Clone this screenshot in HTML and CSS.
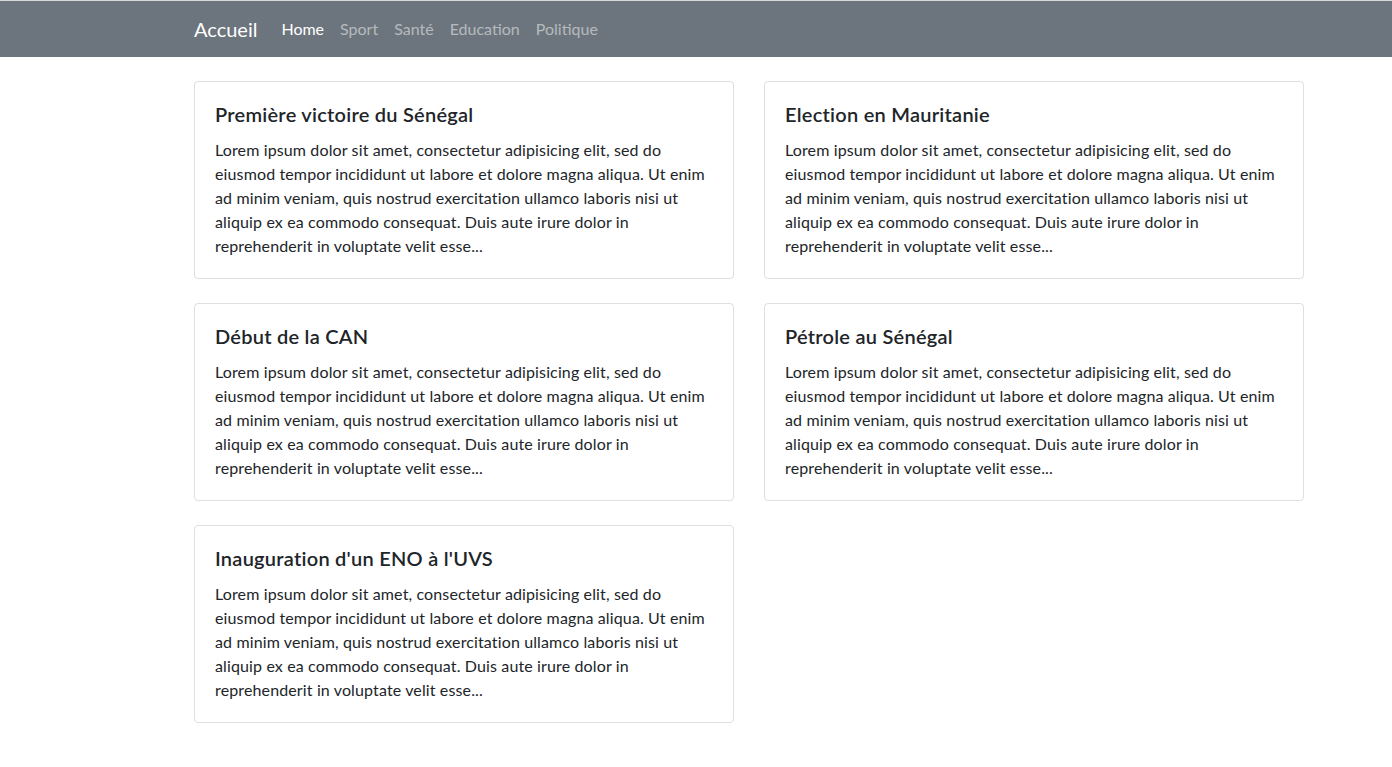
FILE: index.html
```html
<!DOCTYPE html>
<html lang="fr">
<head>
<meta charset="utf-8">
<title>Accueil</title>
<link rel="stylesheet" href="styles.css">
</head>
<body>
<div class="topline"></div>
<nav class="navbar">
  <div class="container nav-inner">
    <a class="brand" href="#">Accueil</a>
    <ul class="nav-links">
      <li><a class="active" href="#">Home</a></li>
      <li><a href="#">Sport</a></li>
      <li><a href="#">Santé</a></li>
      <li><a href="#">Education</a></li>
      <li><a href="#">Politique</a></li>
    </ul>
  </div>
</nav>
<main class="container grid">
  <article class="card">
    <h5 class="card-title">Première victoire du Sénégal</h5>
    <p class="card-text">Lorem ipsum dolor sit amet, consectetur adipisicing elit, sed do eiusmod tempor incididunt ut labore et dolore magna aliqua. Ut enim ad minim veniam, quis nostrud exercitation ullamco laboris nisi ut aliquip ex ea commodo consequat. Duis aute irure dolor in reprehenderit in voluptate velit esse...</p>
  </article>
  <article class="card">
    <h5 class="card-title">Election en Mauritanie</h5>
    <p class="card-text">Lorem ipsum dolor sit amet, consectetur adipisicing elit, sed do eiusmod tempor incididunt ut labore et dolore magna aliqua. Ut enim ad minim veniam, quis nostrud exercitation ullamco laboris nisi ut aliquip ex ea commodo consequat. Duis aute irure dolor in reprehenderit in voluptate velit esse...</p>
  </article>
  <article class="card">
    <h5 class="card-title">Début de la CAN</h5>
    <p class="card-text">Lorem ipsum dolor sit amet, consectetur adipisicing elit, sed do eiusmod tempor incididunt ut labore et dolore magna aliqua. Ut enim ad minim veniam, quis nostrud exercitation ullamco laboris nisi ut aliquip ex ea commodo consequat. Duis aute irure dolor in reprehenderit in voluptate velit esse...</p>
  </article>
  <article class="card">
    <h5 class="card-title">Pétrole au Sénégal</h5>
    <p class="card-text">Lorem ipsum dolor sit amet, consectetur adipisicing elit, sed do eiusmod tempor incididunt ut labore et dolore magna aliqua. Ut enim ad minim veniam, quis nostrud exercitation ullamco laboris nisi ut aliquip ex ea commodo consequat. Duis aute irure dolor in reprehenderit in voluptate velit esse...</p>
  </article>
  <article class="card">
    <h5 class="card-title">Inauguration d'un ENO à l'UVS</h5>
    <p class="card-text">Lorem ipsum dolor sit amet, consectetur adipisicing elit, sed do eiusmod tempor incididunt ut labore et dolore magna aliqua. Ut enim ad minim veniam, quis nostrud exercitation ullamco laboris nisi ut aliquip ex ea commodo consequat. Duis aute irure dolor in reprehenderit in voluptate velit esse...</p>
  </article>
</main>
</body>
</html>
```
FILE: styles.css
```css
* { box-sizing: border-box; }
html, body {
  margin: 0;
  padding: 0;
  background: #fff;
}
body {
  font-family: "Segoe UI", Lato, "Liberation Sans", sans-serif;
  font-size: 16px;
  line-height: 1.5;
  color: #212529;
}
.topline {
  height: 1px;
  background: #d6d8da;
}
.container {
  width: 1110px;
  margin-left: 194px;
}
.navbar {
  background: #6c757d;
  padding: 8px 0;
}
.nav-inner {
  display: flex;
  align-items: center;
}
.brand {
  font-size: 20px;
  line-height: 30px;
  padding: 5px 0;
  margin-right: 16px;
  color: #fff;
  text-decoration: none;
}
.nav-links {
  display: flex;
  list-style: none;
  margin: 0;
  padding: 0;
}
.nav-links a {
  display: block;
  padding: 8px 8px;
  line-height: 24px;
  color: rgba(255, 255, 255, 0.5);
  text-decoration: none;
}
.nav-links a.active {
  color: #fff;
}
.grid {
  display: grid;
  grid-template-columns: 540px 540px;
  column-gap: 30px;
  row-gap: 24px;
  margin-top: 24px;
  padding-bottom: 24px;
}
.card {
  border: 1px solid rgba(0, 0, 0, 0.125);
  border-radius: 4px;
  padding: 20px;
  height: 198px;
}
.card-title {
  margin: 0 0 12px;
  font-size: 20px;
  font-weight: 600;
  line-height: 24px;
  letter-spacing: 0.25px;
}
.card-text {
  margin: 0;
  letter-spacing: 0.13px;
}
```
